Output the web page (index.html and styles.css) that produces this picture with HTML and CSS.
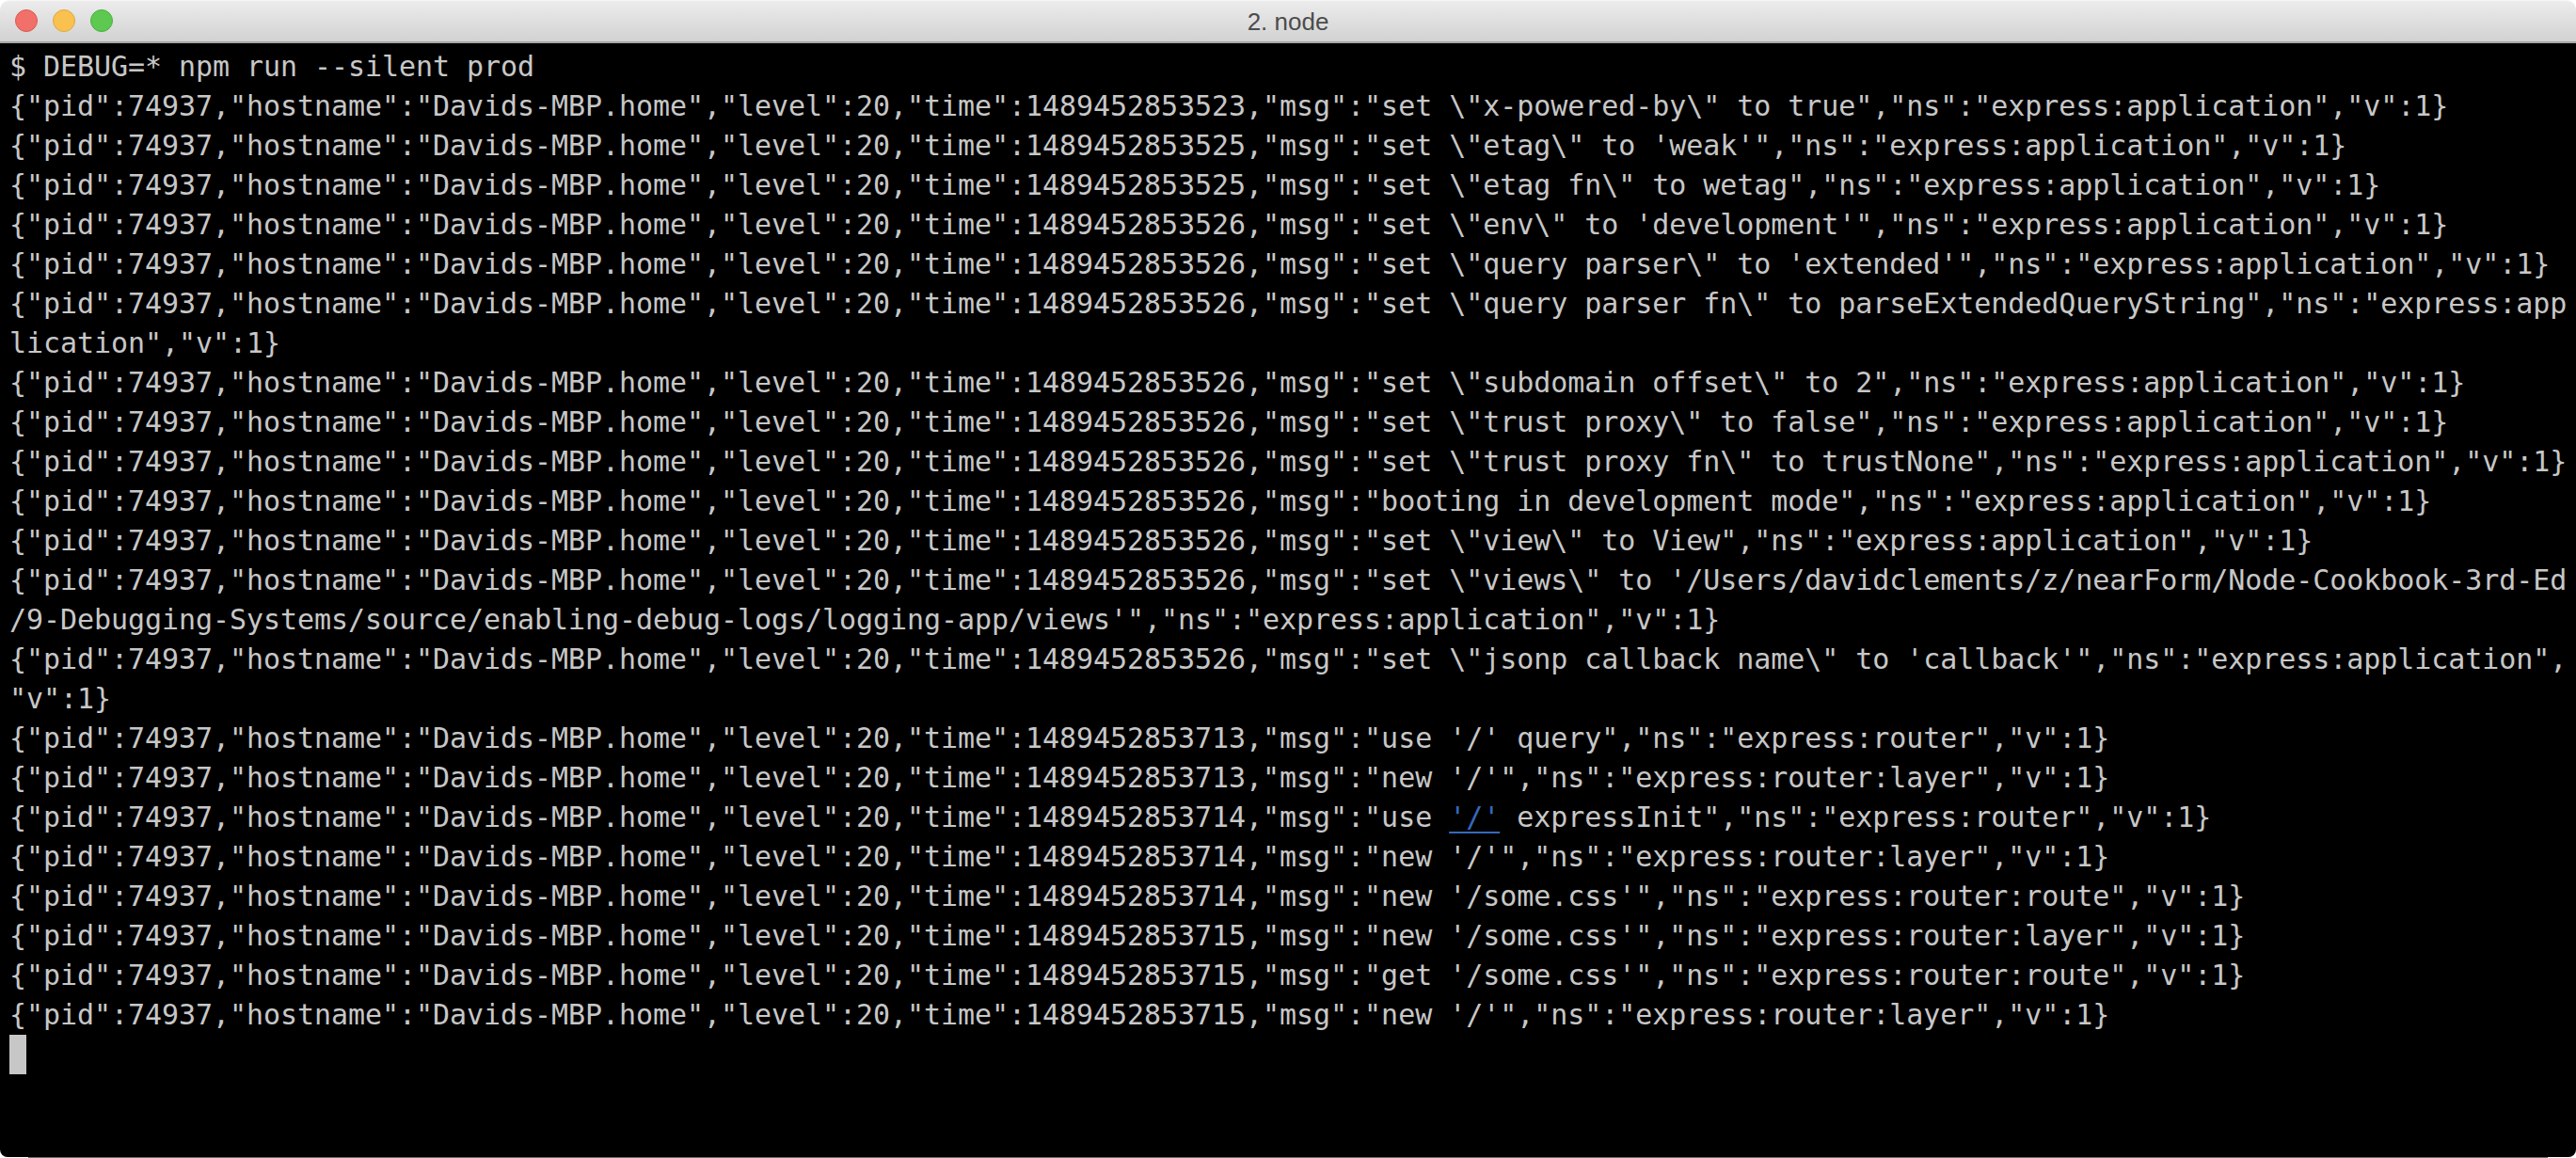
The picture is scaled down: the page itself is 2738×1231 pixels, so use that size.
FILE: index.html
```html
<!DOCTYPE html>
<html lang="en">
<head>
<meta charset="utf-8">
<title>2. node</title>
<link rel="stylesheet" href="styles.css">
</head>
<body>
<div class="window">
<header class="titlebar">
<div class="lights"><span class="light red"></span><span class="light yellow"></span><span class="light green"></span></div>
<div class="title">2. node</div>
</header>
<main class="terminal">
<div class="row">$ DEBUG=* npm run --silent prod</div>
<div class="row">{"pid":74937,"hostname":"Davids-MBP.home","level":20,"time":1489452853523,"msg":"set \"x-powered-by\" to true","ns":"express:application","v":1}</div>
<div class="row">{"pid":74937,"hostname":"Davids-MBP.home","level":20,"time":1489452853525,"msg":"set \"etag\" to 'weak'","ns":"express:application","v":1}</div>
<div class="row">{"pid":74937,"hostname":"Davids-MBP.home","level":20,"time":1489452853525,"msg":"set \"etag fn\" to wetag","ns":"express:application","v":1}</div>
<div class="row">{"pid":74937,"hostname":"Davids-MBP.home","level":20,"time":1489452853526,"msg":"set \"env\" to 'development'","ns":"express:application","v":1}</div>
<div class="row">{"pid":74937,"hostname":"Davids-MBP.home","level":20,"time":1489452853526,"msg":"set \"query parser\" to 'extended'","ns":"express:application","v":1}</div>
<div class="row">{"pid":74937,"hostname":"Davids-MBP.home","level":20,"time":1489452853526,"msg":"set \"query parser fn\" to parseExtendedQueryString","ns":"express:app</div>
<div class="row">lication","v":1}</div>
<div class="row">{"pid":74937,"hostname":"Davids-MBP.home","level":20,"time":1489452853526,"msg":"set \"subdomain offset\" to 2","ns":"express:application","v":1}</div>
<div class="row">{"pid":74937,"hostname":"Davids-MBP.home","level":20,"time":1489452853526,"msg":"set \"trust proxy\" to false","ns":"express:application","v":1}</div>
<div class="row">{"pid":74937,"hostname":"Davids-MBP.home","level":20,"time":1489452853526,"msg":"set \"trust proxy fn\" to trustNone","ns":"express:application","v":1}</div>
<div class="row">{"pid":74937,"hostname":"Davids-MBP.home","level":20,"time":1489452853526,"msg":"booting in development mode","ns":"express:application","v":1}</div>
<div class="row">{"pid":74937,"hostname":"Davids-MBP.home","level":20,"time":1489452853526,"msg":"set \"view\" to View","ns":"express:application","v":1}</div>
<div class="row">{"pid":74937,"hostname":"Davids-MBP.home","level":20,"time":1489452853526,"msg":"set \"views\" to '/Users/davidclements/z/nearForm/Node-Cookbook-3rd-Ed</div>
<div class="row">/9-Debugging-Systems/source/enabling-debug-logs/logging-app/views'","ns":"express:application","v":1}</div>
<div class="row">{"pid":74937,"hostname":"Davids-MBP.home","level":20,"time":1489452853526,"msg":"set \"jsonp callback name\" to 'callback'","ns":"express:application",</div>
<div class="row">"v":1}</div>
<div class="row">{"pid":74937,"hostname":"Davids-MBP.home","level":20,"time":1489452853713,"msg":"use '/' query","ns":"express:router","v":1}</div>
<div class="row">{"pid":74937,"hostname":"Davids-MBP.home","level":20,"time":1489452853713,"msg":"new '/'","ns":"express:router:layer","v":1}</div>
<div class="row">{"pid":74937,"hostname":"Davids-MBP.home","level":20,"time":1489452853714,"msg":"use <span class="link">'/'</span> expressInit","ns":"express:router","v":1}</div>
<div class="row">{"pid":74937,"hostname":"Davids-MBP.home","level":20,"time":1489452853714,"msg":"new '/'","ns":"express:router:layer","v":1}</div>
<div class="row">{"pid":74937,"hostname":"Davids-MBP.home","level":20,"time":1489452853714,"msg":"new '/some.css'","ns":"express:router:route","v":1}</div>
<div class="row">{"pid":74937,"hostname":"Davids-MBP.home","level":20,"time":1489452853715,"msg":"new '/some.css'","ns":"express:router:layer","v":1}</div>
<div class="row">{"pid":74937,"hostname":"Davids-MBP.home","level":20,"time":1489452853715,"msg":"get '/some.css'","ns":"express:router:route","v":1}</div>
<div class="row">{"pid":74937,"hostname":"Davids-MBP.home","level":20,"time":1489452853715,"msg":"new '/'","ns":"express:router:layer","v":1}</div>
<div class="row"><span class="cursor"></span></div>
</main>
</div>
</body>
</html>
```
FILE: styles.css
```css
html, body {
  margin: 0;
  height: 100%;
  background: #fff;
  overflow: hidden;
}

.window {
  display: flex;
  flex-direction: column;
  height: 1231px;
}

.titlebar {
  position: relative;
  display: flex;
  align-items: center;
  justify-content: center;
  height: 46px;
  flex: none;
  box-sizing: border-box;
  background: linear-gradient(#ececec, #d2d2d2);
  border-top: 1px solid #f6f6f6;
  border-bottom: 2px solid #a6a6a6;
  border-radius: 10px 10px 0 0;
}

.lights {
  position: absolute;
  left: 16px;
  top: 9px;
  display: flex;
  gap: 16px;
}

.light {
  width: 24px;
  height: 24px;
  box-sizing: border-box;
  border-radius: 50%;
  border: 1px solid;
}

.red { background: #f1706a; border-color: #dc5a52; }
.yellow { background: #f8c150; border-color: #e0a83f; }
.green { background: #5dc951; border-color: #4bb040; }

.title {
  font: 26px/1 "Liberation Sans", Arial, sans-serif;
  color: #4c4c4c;
}

.terminal {
  position: relative;
  flex: 1;
  background: #000;
  padding: 4px 10px 0;
  margin-bottom: 1px;
  border-radius: 0 0 8px 8px;
}

.terminal::after {
  content: "";
  position: absolute;
  left: 30px;
  right: 30px;
  bottom: -1px;
  height: 1px;
  background: #6e6e6e;
}

.row {
  height: 42px;
  font: 30px/42px "DejaVu Sans Mono", "Liberation Mono", monospace;
  letter-spacing: -0.06px;
  color: #c7c7c7;
  white-space: pre;
}

.link {
  color: #3569bd;
  text-decoration: underline;
  text-decoration-thickness: 2px;
  text-underline-offset: 5px;
}

.cursor {
  display: block;
  width: 18px;
  height: 42px;
  background: #c7c7c7;
}
```
